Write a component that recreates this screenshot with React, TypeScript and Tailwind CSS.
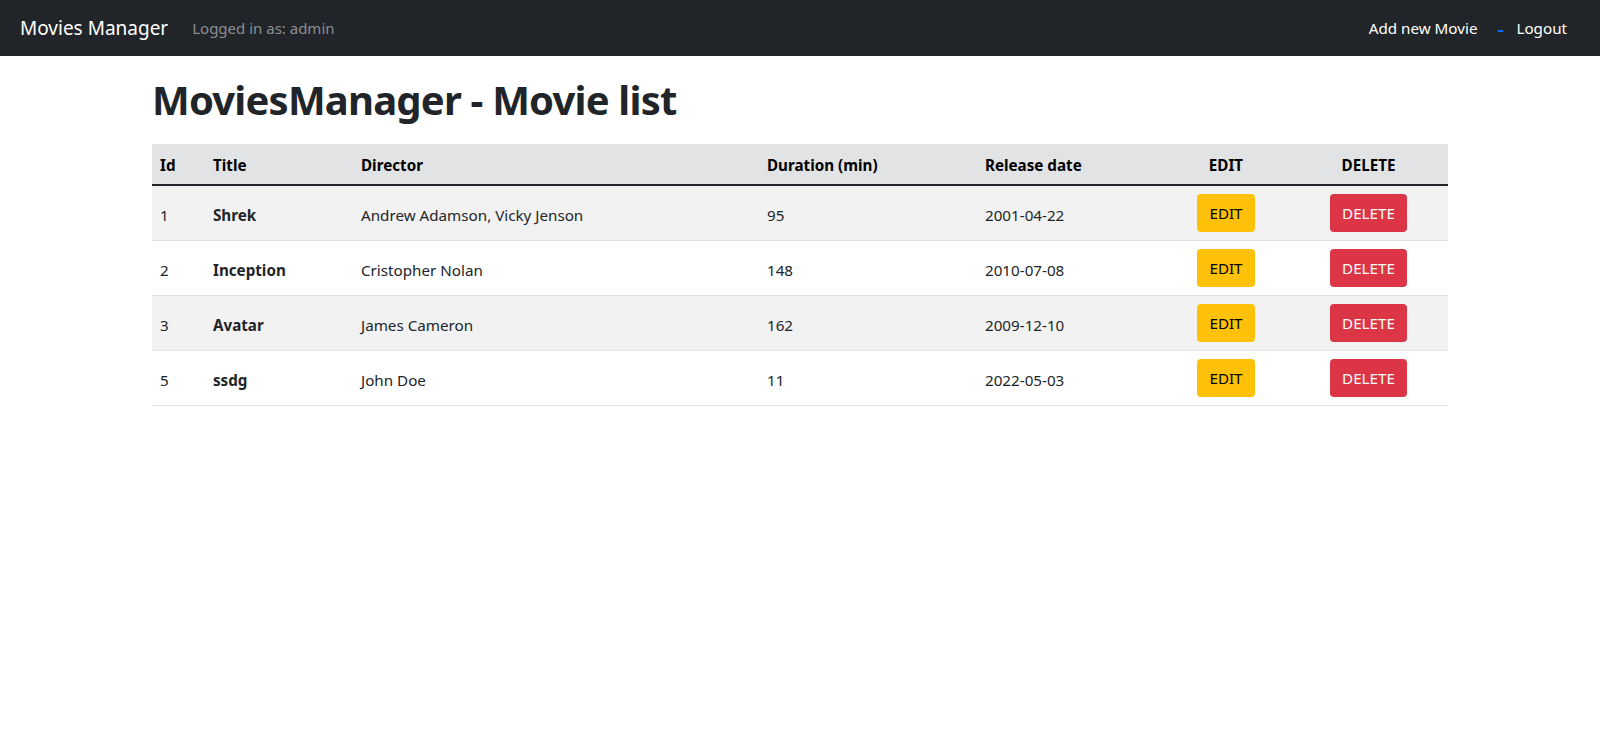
import React from "react";

const movies = [
  { id: 1, title: "Shrek", director: "Andrew Adamson, Vicky Jenson", duration: 95, release: "2001-04-22" },
  { id: 2, title: "Inception", director: "Cristopher Nolan", duration: 148, release: "2010-07-08" },
  { id: 3, title: "Avatar", director: "James Cameron", duration: 162, release: "2009-12-10" },
  { id: 5, title: "ssdg", director: "John Doe", duration: 11, release: "2022-05-03" },
];

const Navbar = () => (
  <nav className="h-14 bg-[#212529] flex items-center pl-5 pr-[33px]">
    <span className="text-[19px] text-white leading-[30px]">Movies Manager</span>
    <span className="ml-[24px] text-[15px] text-[#8c8e91] leading-6">Logged in as: admin</span>
    <div className="ml-auto flex items-center">
      <a className="text-[15.2px] text-white leading-6">Add new Movie</a>
      {/* stray underlined link */}
      <span className="ml-[21px] mt-[5px] w-[5px] h-[2px] bg-[#0d6efd]"></span>
      <a className="ml-[13px] text-[15.2px] text-white leading-6">Logout</a>
    </div>
  </nav>
);

export default function App() {
  return (
    <div className="min-h-screen bg-white text-[#212529] font-['Noto_Sans','Liberation_Sans',sans-serif]">
      <Navbar />

      <div className="max-w-[1320px] mx-auto px-3">
        {/* TITLE */}
        <h1 className="mt-5 mb-5 text-[40px] leading-[48px] font-bold tracking-[-0.8px]">
          MoviesManager - Movie list
        </h1>

        {/* MOVIE TABLE */}
        <table className="w-full table-fixed text-[15.2px]">
          <colgroup>
            <col className="w-[53px]" />
            <col className="w-[148px]" />
            <col className="w-[406px]" />
            <col className="w-[218px]" />
            <col className="w-[186px]" />
            <col className="w-[126px]" />
            <col className="w-[159px]" />
          </colgroup>
          <thead className="bg-[#e2e3e5] text-black">
            <tr className="border-b-2 border-[#212529]">
              <th className="px-2 pt-[9px] pb-[7px] leading-6 text-left font-bold">Id</th>
              <th className="px-2 pt-[9px] pb-[7px] leading-6 text-left font-bold">Title</th>
              <th className="px-2 pt-[9px] pb-[7px] leading-6 text-left font-bold">Director</th>
              <th className="px-2 pt-[9px] pb-[7px] leading-6 text-left font-bold">Duration (min)</th>
              <th className="px-2 pt-[9px] pb-[7px] leading-6 text-left font-bold">Release date</th>
              <th className="px-2 pt-[9px] pb-[7px] leading-6 text-center font-bold">EDIT</th>
              <th className="px-2 pt-[9px] pb-[7px] leading-6 text-center font-bold">DELETE</th>
            </tr>
          </thead>
          <tbody>
            {movies.map((movie, index) => (
              <tr
                key={movie.id}
                className={`border-b border-[#dee2e6] ${index % 2 === 0 ? "bg-[#f2f2f2]" : "bg-white"}`}
              >
                <td className="px-2 pt-[10px] pb-[6px] align-middle leading-6">{movie.id}</td>
                <td className="px-2 pt-[10px] pb-[6px] align-middle leading-6 font-bold">{movie.title}</td>
                <td className="px-2 pt-[10px] pb-[6px] align-middle leading-6">{movie.director}</td>
                <td className="px-2 pt-[10px] pb-[6px] align-middle leading-6">{movie.duration}</td>
                <td className="px-2 pt-[10px] pb-[6px] align-middle leading-6">{movie.release}</td>
                <td className="p-2 align-middle text-center">
                  <button className="h-[38px] px-3 leading-6 rounded bg-[#ffc107] text-black">EDIT</button>
                </td>
                <td className="p-2 align-middle text-center">
                  <button className="h-[38px] px-3 leading-6 rounded bg-[#dc3545] text-white">DELETE</button>
                </td>
              </tr>
            ))}
          </tbody>
        </table>
      </div>
    </div>
  );
}
